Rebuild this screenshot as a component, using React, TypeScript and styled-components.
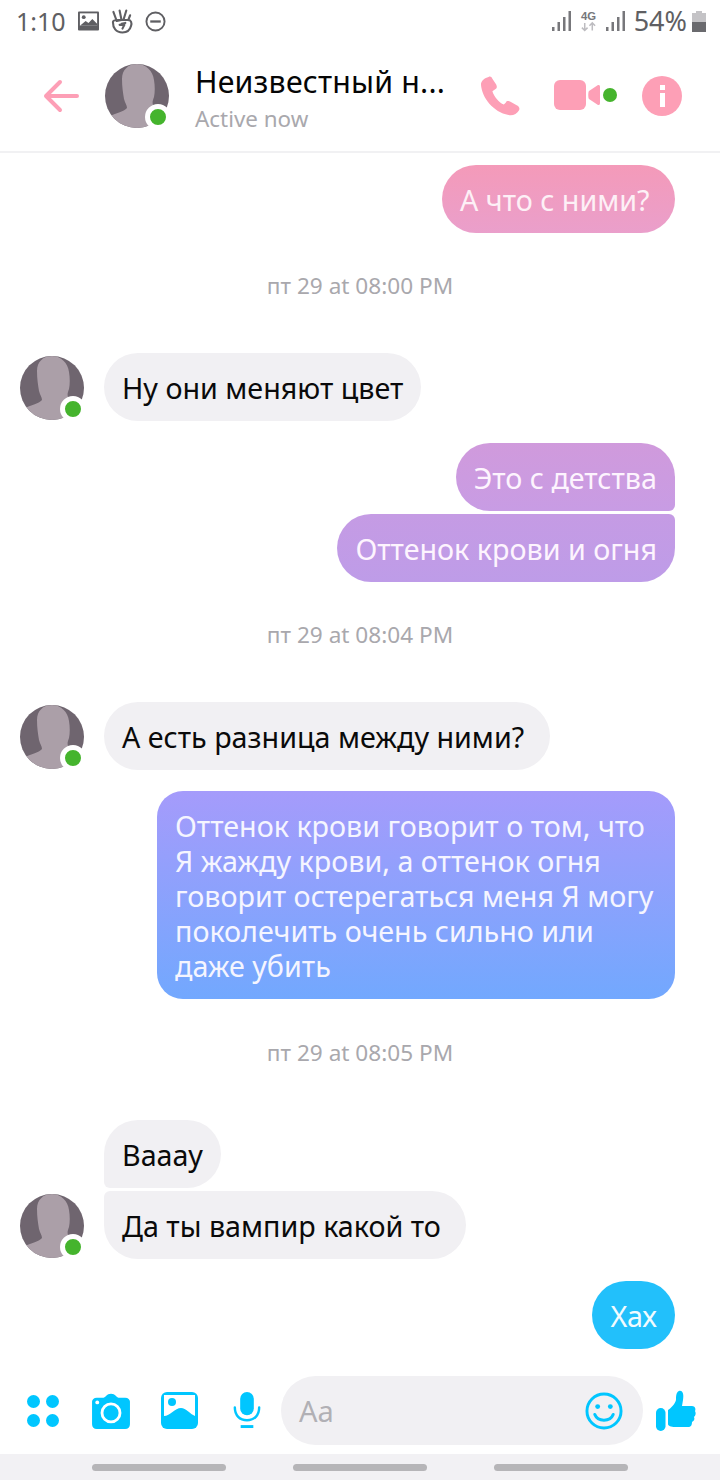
import React from 'react';
import styled, { createGlobalStyle } from 'styled-components';

const GlobalStyle = createGlobalStyle`
  html, body {
    margin: 0;
    padding: 0;
    background: #fff;
    font-family: 'Noto Sans', 'Open Sans', sans-serif;
  }
`;

const Screen = styled.div`
  width: 720px;
  height: 1480px;
  display: flex;
  flex-direction: column;
  background: #fff;
  overflow: hidden;
`;

const StatusBar = styled.div`
  height: 46px;
  flex: none;
  display: flex;
  align-items: center;
  justify-content: space-between;
  padding: 0 14px 4px 16px;
  box-sizing: border-box;
  color: #5f5f63;
`;

const StatusGroup = styled.div`
  display: flex;
  align-items: center;
  gap: 12px;
`;

const StatusRight = styled(StatusGroup)`
  gap: 9px;
`;

const StatusText = styled.span<{ $size: number }>`
  font-size: ${p => p.$size}px;
  line-height: 30px;
`;

const Header = styled.header`
  height: 107px;
  flex: none;
  display: flex;
  align-items: center;
  padding: 0 38px 5px 43px;
  box-sizing: border-box;
  border-bottom: 2px solid #f1f1f3;
`;

const BackButton = styled.div`
  width: 36px;
  height: 34px;
  margin-right: 26px;
`;

const AvatarWrap = styled.div<{ $size: number }>`
  position: relative;
  width: ${p => p.$size}px;
  height: ${p => p.$size}px;
  flex: none;
`;

const OnlineDot = styled.span`
  position: absolute;
  right: -2px;
  bottom: -2px;
  width: 16px;
  height: 16px;
  border: 5px solid #fff;
  border-radius: 50%;
  background: #45b42d;
`;

const HeaderText = styled.div`
  width: 280px;
  margin-left: 26px;
  margin-top: 4px;
  display: flex;
  flex-direction: column;
  flex: none;
`;

const Title = styled.div`
  font-size: 30.3px;
  line-height: 38px;
  color: #050505;
  letter-spacing: 0.2px;
  white-space: nowrap;
`;

const Subtitle = styled.div`
  font-size: 22.4px;
  line-height: 30px;
  margin-top: 3px;
  color: #a9a8ad;
`;

const HeaderActions = styled.div`
  display: flex;
  align-items: center;
  margin-left: auto;
`;

const CallIcon = styled.svg`
  width: 40px;
  height: 40px;
  margin-right: 34px;
`;

const VideoIcon = styled.svg`
  width: 64px;
  height: 32px;
  margin-right: 24px;
`;

const InfoIcon = styled.svg`
  width: 40px;
  height: 40px;
`;

const Messages = styled.main`
  flex: 1;
  display: flex;
  flex-direction: column;
  padding: 12px 45px 0 20px;
  min-height: 0;
`;

const Row = styled.div<{ $gap: number }>`
  display: flex;
  align-items: flex-end;
  margin-top: ${p => p.$gap}px;
`;

const OutRow = styled(Row)`
  justify-content: flex-end;
`;

const AvatarSlot = styled.div`
  width: 84px;
  flex: none;
  padding-bottom: 1px;
`;

const Bubble = styled.div<{ $bg: string; $color: string; $corners: string }>`
  padding: 16.5px 18px;
  font-size: 28.7px;
  line-height: 35px;
  color: ${p => p.$color};
  background: ${p => p.$bg};
  border-radius: ${p => p.$corners};
  box-sizing: border-box;
`;

const LongBubble = styled(Bubble)`
  width: 518px;
`;

const Stamp = styled.div<{ $before: number; $after: number }>`
  text-align: center;
  font-size: 22.6px;
  line-height: 30px;
  color: #a9a8ad;
  margin: ${p => p.$before}px -45px ${p => p.$after}px -20px;
`;

const Composer = styled.div`
  height: 94px;
  flex: none;
  display: flex;
  align-items: center;
  padding: 7px 24px 0 27px;
  box-sizing: border-box;
`;

const Tool = styled.svg<{ $left?: number }>`
  flex: none;
  margin-left: ${p => p.$left ?? 0}px;
`;

const InputPill = styled.div`
  width: 362px;
  height: 69px;
  margin-left: 20px;
  margin-right: 13px;
  padding: 0 20px 0 18px;
  box-sizing: border-box;
  display: flex;
  align-items: center;
  justify-content: space-between;
  border-radius: 35px;
  background: #f1f0f3;
  font-size: 29px;
  color: #b1b0b5;
`;

const NavBar = styled.nav`
  height: 26px;
  flex: none;
  display: flex;
  align-items: center;
  justify-content: center;
  gap: 67px;
  background: #f2f1f4;
`;

const NavPill = styled.span`
  width: 134px;
  height: 7px;
  border-radius: 4px;
  background: #b6b5b8;
`;

const Avatar = ({ size }: { size: number }) => (
  <AvatarWrap $size={size}>
    <svg width={size} height={size} viewBox="0 0 64 64">
      <clipPath id={`avatar-${size}`}>
        <circle cx="32" cy="32" r="32" />
      </clipPath>
      <g clipPath={`url(#avatar-${size})`}>
        <rect width="64" height="64" fill="#6f656f" />
        <path
          d="M32 0C23 0 17 6 17 15c0 8 1 14 2 20 1 4 3 6 3 9-3 4-12 5-19 9v11h64V47c-6-1-15-2-19-6-1-3 0-5 1-8 1-5 1-11 0-17C48 7 41 0 32 0z"
          fill="#ab9fa8"
        />
      </g>
    </svg>
    <OnlineDot />
  </AvatarWrap>
);

const SignalBars = () => (
  <svg width="19" height="20" viewBox="0 0 19 20" fill="#77777b">
    <rect x="0" y="16" width="2.5" height="4" />
    <rect x="5.5" y="11" width="2.5" height="9" />
    <rect x="11" y="6" width="2.5" height="14" />
    <rect x="16.5" y="0" width="2.5" height="20" />
  </svg>
);

const IN = '34px';
const OUT_TOP = '34px 34px 6px 34px';
const OUT_BOTTOM = '34px 6px 34px 34px';
const NBSP = '\u00a0';

export default function App() {
  return (
    <Screen>
      <GlobalStyle />
      <StatusBar>
        <StatusGroup>
          <StatusText $size={25}>1:10</StatusText>
          <svg width="21" height="20" viewBox="0 0 22 20">
            <rect width="22" height="20" rx="1" fill="#5f5f63" />
            <rect x="2" y="2" width="18" height="13" fill="#fff" />
            <circle cx="6" cy="6" r="2" fill="#5f5f63" />
            <path d="M2 15l6-5 3 2 4-4 5 5v2z" fill="#5f5f63" />
          </svg>
          <svg width="22" height="26" viewBox="0 0 23 26" fill="none" stroke="#5f5f63" strokeWidth="2.2" strokeLinecap="round" strokeLinejoin="round">
            <path d="M6 13L2.5 3.5M6 13l5-1M11 12L9 2M13 12l3-10M18 12l2-5" />
            <path d="M2 14c0-2 3-2 6-2h10c3 0 4 3 3 6-1 4-4 7-9 7-7 0-10-5-10-11z" />
            <path d="M9 17h5l-2 4M15 15l-4 1" />
          </svg>
          <svg width="21" height="21" viewBox="0 0 22 22" fill="none" stroke="#5f5f63" strokeWidth="2">
            <circle cx="11" cy="11" r="9.5" />
            <path d="M5.5 11h11" strokeWidth="2.4" />
          </svg>
        </StatusGroup>
        <StatusRight>
          <SignalBars />
          <svg width="17" height="24" viewBox="0 0 18 24">
            <text x="9" y="11" textAnchor="middle" fontSize="12" fontWeight="700" fontFamily="Liberation Sans, sans-serif" fill="#77777b">4G</text>
            <path d="M5 14v8M2 19l3 3 3-3" fill="none" stroke="#bdbcc0" strokeWidth="1.6" />
            <path d="M13 22v-8M10 17l3-3 3 3" fill="none" stroke="#bdbcc0" strokeWidth="1.6" />
          </svg>
          <SignalBars />
          <StatusText $size={27}>54%</StatusText>
          <svg width="14" height="21" viewBox="0 0 14 21" style={{ marginLeft: -4 }}>
            <path d="M4 0h6v2h4v19H0V2h4z" fill="#c4c3c6" />
            <rect y="11" width="14" height="10" fill="#6a6a6e" />
          </svg>
        </StatusRight>
      </StatusBar>

      <Header>
        <BackButton>
          <svg width="36" height="34" viewBox="0 0 36 34" fill="none" stroke="#fd9fb6" strokeWidth="4" strokeLinecap="round" strokeLinejoin="round">
            <path d="M34 17H3M17 3L3 17l14 14" />
          </svg>
        </BackButton>
        <Avatar size={64} />
        <HeaderText>
          <Title>Неизвестный н...</Title>
          <Subtitle>Active now</Subtitle>
        </HeaderText>
        <HeaderActions>
          <CallIcon viewBox="0 0 42 42">
            <path d="M9 1C5 2 1 5 1 9c1 14 13 29 29 32 4 1 9-1 11-5 1-2 0-4-2-5l-7-4c-2-1-4-1-5 1l-2 2c-5-2-10-8-12-14l3-2c2-1 2-3 1-5L13 3c-1-2-2-3-4-2z" fill="#fd9fb6" />
          </CallIcon>
          <VideoIcon viewBox="0 0 64 32">
            <rect x="0" y="0" width="32" height="30" rx="6" fill="#fd9fb6" />
            <path d="M35 11l9-6c1 0 2 0 2 2v16c0 2-1 2-2 2l-9-6c-1-1-1-7 0-8z" fill="#fd9fb6" />
            <circle cx="56" cy="15" r="7" fill="#45b42d" />
          </VideoIcon>
          <InfoIcon viewBox="0 0 40 40">
            <circle cx="20" cy="20" r="20" fill="#fd9fb6" />
            <rect x="18" y="9" width="5" height="5" fill="#fff" />
            <rect x="18" y="17" width="5" height="14" fill="#fff" />
          </InfoIcon>
        </HeaderActions>
      </Header>

      <Messages>
        <OutRow $gap={0}>
          <Bubble $bg="linear-gradient(180deg, #f49ab9 0%, #ea9fcb 100%)" $color="#fdf0f6" $corners={IN}>А что с ними?{NBSP}</Bubble>
        </OutRow>
        <Stamp $before={38} $after={52}>пт 29 at 08:00 PM</Stamp>
        <Row $gap={0}>
          <AvatarSlot><Avatar size={64} /></AvatarSlot>
          <Bubble $bg="#f1f0f3" $color="#0a0a0a" $corners={IN}>Ну они меняют цвет</Bubble>
        </Row>
        <OutRow $gap={22}>
          <Bubble $bg="linear-gradient(180deg, #d09adc 0%, #c89ce4 100%)" $color="#fdf4fe" $corners={OUT_TOP}>Это с детства</Bubble>
        </OutRow>
        <OutRow $gap={3}>
          <Bubble $bg="linear-gradient(180deg, #c59be4 0%, #be9ce8 100%)" $color="#fdf4fe" $corners={OUT_BOTTOM}>Оттенок крови и огня</Bubble>
        </OutRow>
        <Stamp $before={38} $after={52}>пт 29 at 08:04 PM</Stamp>
        <Row $gap={0}>
          <AvatarSlot><Avatar size={64} /></AvatarSlot>
          <Bubble $bg="#f1f0f3" $color="#0a0a0a" $corners={IN}>А есть разница между ними?{NBSP}</Bubble>
        </Row>
        <OutRow $gap={21}>
          <LongBubble $bg="linear-gradient(180deg, #a59bfb 0%, #72a8fe 100%)" $color="#f5f5ff" $corners="26px">
            Оттенок крови говорит о том, что Я жажду крови, а оттенок огня говорит остерегаться меня Я могу поколечить очень сильно или даже убить
          </LongBubble>
        </OutRow>
        <Stamp $before={39} $after={52}>пт 29 at 08:05 PM</Stamp>
        <Row $gap={0}>
          <AvatarSlot />
          <Bubble $bg="#f1f0f3" $color="#0a0a0a" $corners="34px 34px 34px 6px">Вааау</Bubble>
        </Row>
        <Row $gap={3}>
          <AvatarSlot><Avatar size={64} /></AvatarSlot>
          <Bubble $bg="#f1f0f3" $color="#0a0a0a" $corners="6px 34px 34px 34px">Да ты вампир какой то{NBSP}</Bubble>
        </Row>
        <OutRow $gap={22}>
          <Bubble $bg="#22c0fb" $color="#f1fbff" $corners={IN}>Хах</Bubble>
        </OutRow>
      </Messages>

      <Composer>
        <Tool width="32" height="32" viewBox="0 0 32 32" fill="#00c6ff">
          <circle cx="6.5" cy="6.5" r="6.5" />
          <circle cx="25.5" cy="6.5" r="6.5" />
          <circle cx="6.5" cy="25.5" r="6.5" />
          <circle cx="25.5" cy="25.5" r="6.5" />
        </Tool>
        <Tool $left={32} width="40" height="36" viewBox="0 0 40 38">
          <path d="M5 5h7c1 0 2-1 3-2 2-3 8-3 10 0 1 1 2 2 3 2h7c3 0 5 2 5 4v24c0 3-2 5-5 5H5c-3 0-5-2-5-5V9c0-2 2-4 5-4z" fill="#00c6ff" />
          <circle cx="20" cy="21" r="9.5" fill="none" stroke="#fff" strokeWidth="3" />
          <circle cx="5.5" cy="10" r="2" fill="#fff" />
        </Tool>
        <Tool $left={30} width="37" height="37" viewBox="0 0 37 37">
          <rect width="37" height="37" rx="6" fill="#00c6ff" />
          <path d="M3 3h31v21c-5-2-9-8-14-8-6 0-11 8-17 8z" fill="#fff" />
          <circle cx="11" cy="10" r="4" fill="#00c6ff" />
        </Tool>
        <Tool $left={35} width="28" height="37" viewBox="0 0 28 38">
          <rect x="7" y="0" width="14" height="24" rx="7" fill="#00c6ff" />
          <path d="M1.5 16c0 8 5 13 12.5 13S26.5 24 26.5 16" fill="none" stroke="#00c6ff" strokeWidth="2.5" strokeLinecap="round" />
          <rect x="7.5" y="34" width="13" height="3" fill="#00c6ff" />
        </Tool>
        <InputPill>
          <span>Aa</span>
          <svg width="38" height="38" viewBox="0 0 39 39" fill="none" stroke="#00c6ff" strokeWidth="3">
            <circle cx="19.5" cy="19.5" r="17.5" />
            <circle cx="13" cy="15" r="2.5" fill="#00c6ff" stroke="none" />
            <circle cx="26" cy="15" r="2.5" fill="#00c6ff" stroke="none" />
            <path d="M10 23c2 5 6 6 9.5 6s7.5-1 9.5-6" strokeLinecap="round" />
          </svg>
        </InputPill>
        <Tool width="40" height="41" viewBox="0 0 40 41" fill="#00c6ff">
          <rect x="0" y="18" width="9.5" height="23" rx="4.7" />
          <path d="M12 20c3-2 7-6 8-10 0-3 0-8 3-9 4-1 5 4 4 9l-1 6h10c3 0 4 3 3 5 1 2 1 4-1 6 1 2 0 4-2 5 0 3-1 5-4 5H19c-4 0-7-1-7-3z" />
        </Tool>
      </Composer>

      <NavBar>
        <NavPill />
        <NavPill />
        <NavPill />
      </NavBar>
    </Screen>
  );
}
